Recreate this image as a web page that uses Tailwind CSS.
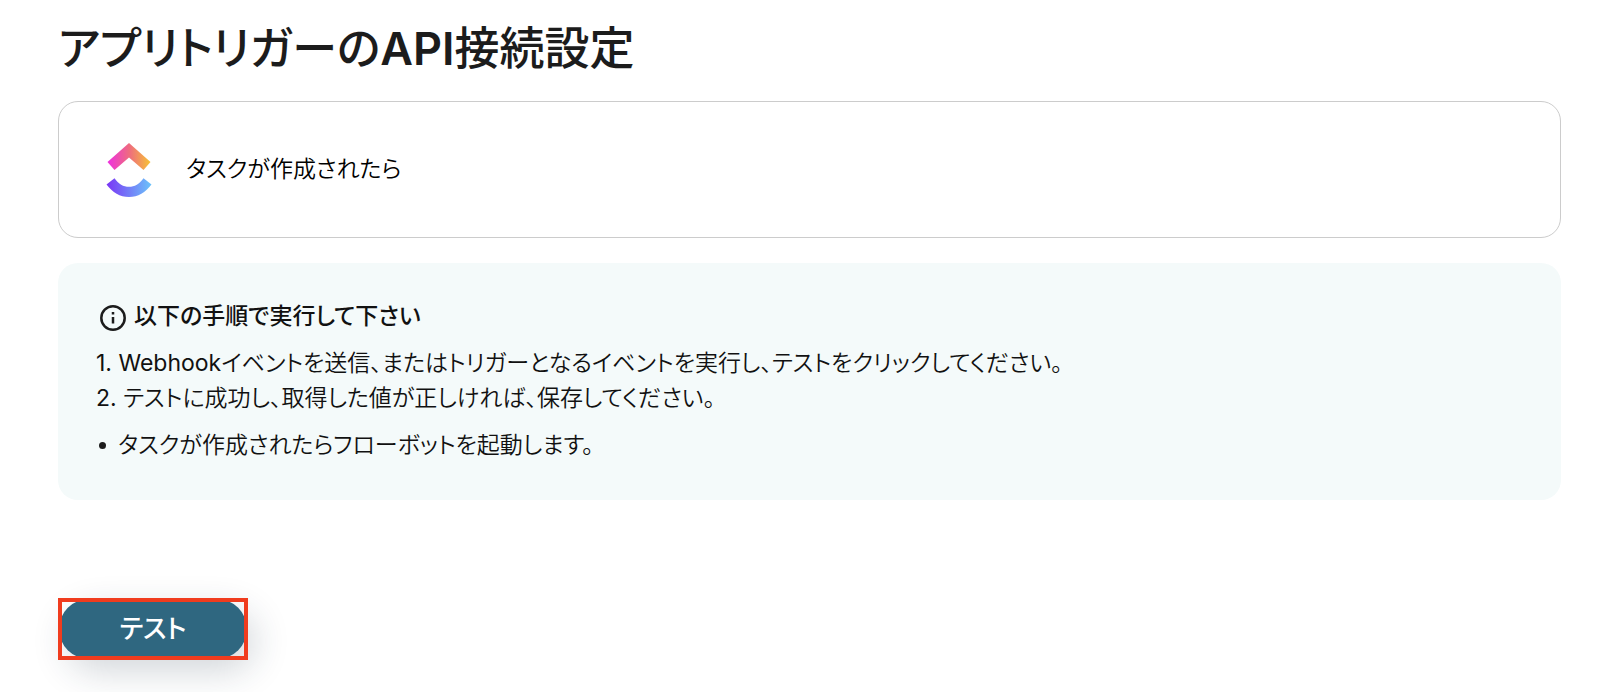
<!DOCTYPE html>
<html lang="ja">
<head>
<meta charset="utf-8">
<meta name="viewport" content="width=device-width, initial-scale=1">
<title>アプリトリガーのAPI接続設定</title>
<script src="https://cdn.jsdelivr.net/npm/@tailwindcss/browser@4"></script>
</head>
<body class="bg-white font-[Inter,'Noto_Sans_CJK_JP',sans-serif] text-[#111111] text-[23px] leading-[35px] font-[350] [font-feature-settings:'palt']">
<main class="pt-5 pb-8 pl-[58px] pr-[39px]">
  <h1 class="text-[45px] leading-[57px] font-medium text-[#1c1c1c]">アプリトリガーの<span class="font-semibold">API</span>接続設定</h1>

  <section class="mt-6 flex items-center gap-[34px] rounded-[20px] border border-[#cccccc] px-[47px] py-10 text-black">
    <svg class="h-[55px] w-[46px]" viewBox="0 -1 46 55" aria-hidden="true">
      <defs>
        <linearGradient id="roof" x1="0" x2="1" y1="0" y2="0">
          <stop offset="0" stop-color="#ee2fe0"/><stop offset=".5" stop-color="#ee6b80"/><stop offset="1" stop-color="#f6c235"/>
        </linearGradient>
        <linearGradient id="smile" x1="0" x2="1" y1="0" y2="0">
          <stop offset="0" stop-color="#7a35f5"/><stop offset="1" stop-color="#6cc4fa"/>
        </linearGradient>
      </defs>
      <path fill="url(#roof)" d="M23 0 1.500 19l7 8L23 14.500 37.500 27l7-8z"/>
      <path fill="url(#smile)" d="M.5 41.500l8-6.300C12.500 41 17.500 43.800 23 43.800s10.500-2.800 14.500-8.600l8 6.300C39.500 49.500 32 54 23 54S6.500 49.500.5 41.500z"/>
    </svg>
    <p>タスクが作成されたら</p>
  </section>

  <section class="mt-[25px] rounded-[20px] bg-[#f4fafa] px-[38px] pt-9 pb-[37px]">
    <h2 class="flex items-center gap-2 font-medium">
      <svg class="h-8 w-[30px]" viewBox="0 0 30 32" fill="none" stroke="#1c1c1c" stroke-width="2.500" aria-hidden="true">
        <circle cx="17" cy="17" r="11.700"/><path d="M17 16v6.500M17 11v2.500"/>
      </svg>
      以下の手順で実行して下さい
    </h2>
    <p class="mt-3"><span class="font-normal">1. Webhook</span>イベントを送信、またはトリガーとなるイベントを実行し、テストをクリックしてください。</p>
    <p><span class="font-normal">2. </span>テストに成功し、取得した値が正しければ、保存してください。</p>
    <ul class="mt-3"><li class="flex items-center gap-3"><span class="ml-[3px] size-[7px] rounded-full bg-[#1c1c1c]"></span>タスクが作成されたらフローボットを起動します。</li></ul>
  </section>

  <div class="relative mt-[98px] w-[190px] p-px">
    <button type="button" class="block h-[60px] w-full rounded-full bg-[#2f6780] pb-0.5 text-[26px] font-medium text-white shadow-[8px_12px_36px_rgba(30,50,70,0.20)]">テスト</button>
    <span class="pointer-events-none absolute inset-0 border-4 border-[#f03c1e]"></span>
  </div>
</main>
</body>
</html>
